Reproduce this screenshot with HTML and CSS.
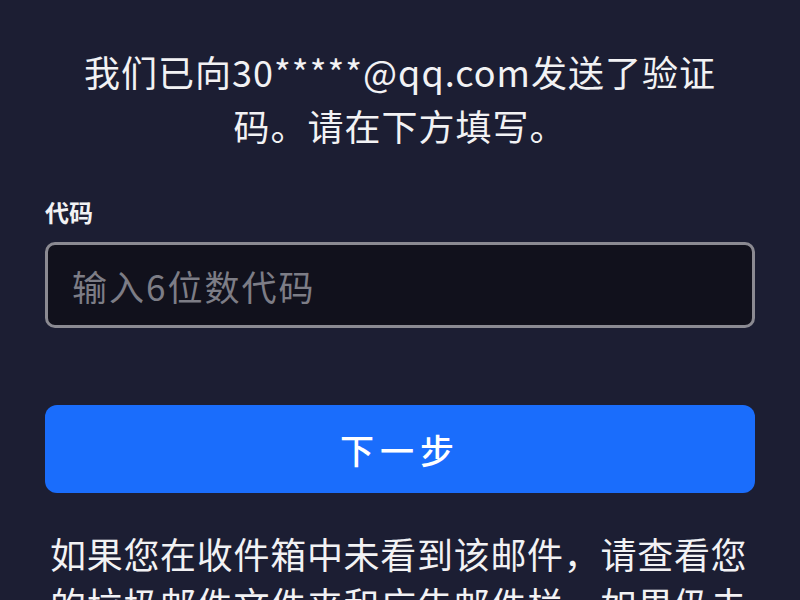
FILE: index.html
```html
<!DOCTYPE html>
<html lang="zh-CN">
<head>
    <meta charset="UTF-8">
    <meta name="viewport" content="width=device-width, initial-scale=1.0">
    <title>验证邮箱</title>
    <link rel="stylesheet" href="styles.css">
</head>
<body>
    <main class="verify">
        <h2 class="intro">我们已向30*****@qq.com发送了验证码。请在下方填写。</h2>

        <label class="field-label" for="codeInput">代码</label>
        <input type="text" id="codeInput" class="code-input" placeholder="输入6位数代码" maxlength="6">

        <button class="next-btn">下一步</button>

        <p class="hint">如果您在收件箱中未看到该邮件，请查看您的垃圾邮件文件夹和广告邮件栏。如果仍未收到，请稍后重新发送验证码。</p>
    </main>
</body>
</html>
```

FILE: styles.css
```css
body {
    margin: 0;
    padding: 0;
    background-color: #1c1e33;
    color: #f2f2f4;
    font-family: "Noto Sans CJK SC", "Noto Sans", sans-serif;
    overflow: hidden;
}

.verify {
    display: flex;
    flex-direction: column;
    padding: 44px 45px 0;
}

.intro {
    margin: 0 auto;
    max-width: 665px;
    font-size: 36px;
    font-weight: 400;
    letter-spacing: 1px;
    line-height: 54px;
    text-align: center;
}

.field-label {
    margin-top: 44px;
    font-size: 24px;
    font-weight: 700;
    line-height: 32px;
}

.code-input {
    margin-top: 14px;
    height: 86px;
    box-sizing: border-box;
    padding: 0 24px;
    background-color: #11111c;
    border: 3px solid #8b8a92;
    border-radius: 10px;
    color: #f2f2f4;
    font-family: inherit;
    font-size: 35px;
    letter-spacing: 2px;
    outline: none;
}

.code-input::placeholder {
    color: #7d7d86;
}

.next-btn {
    margin-top: 77px;
    height: 88px;
    background-color: #1a6dfc;
    border: none;
    border-radius: 12px;
    color: #fff;
    font-family: inherit;
    font-size: 34px;
    font-weight: 500;
    letter-spacing: 6px;
    cursor: pointer;
}

.hint {
    margin: 35px 0 0;
    padding: 0 5px;
    font-size: 36px;
    letter-spacing: 0.7px;
    line-height: 50px;
}
```
